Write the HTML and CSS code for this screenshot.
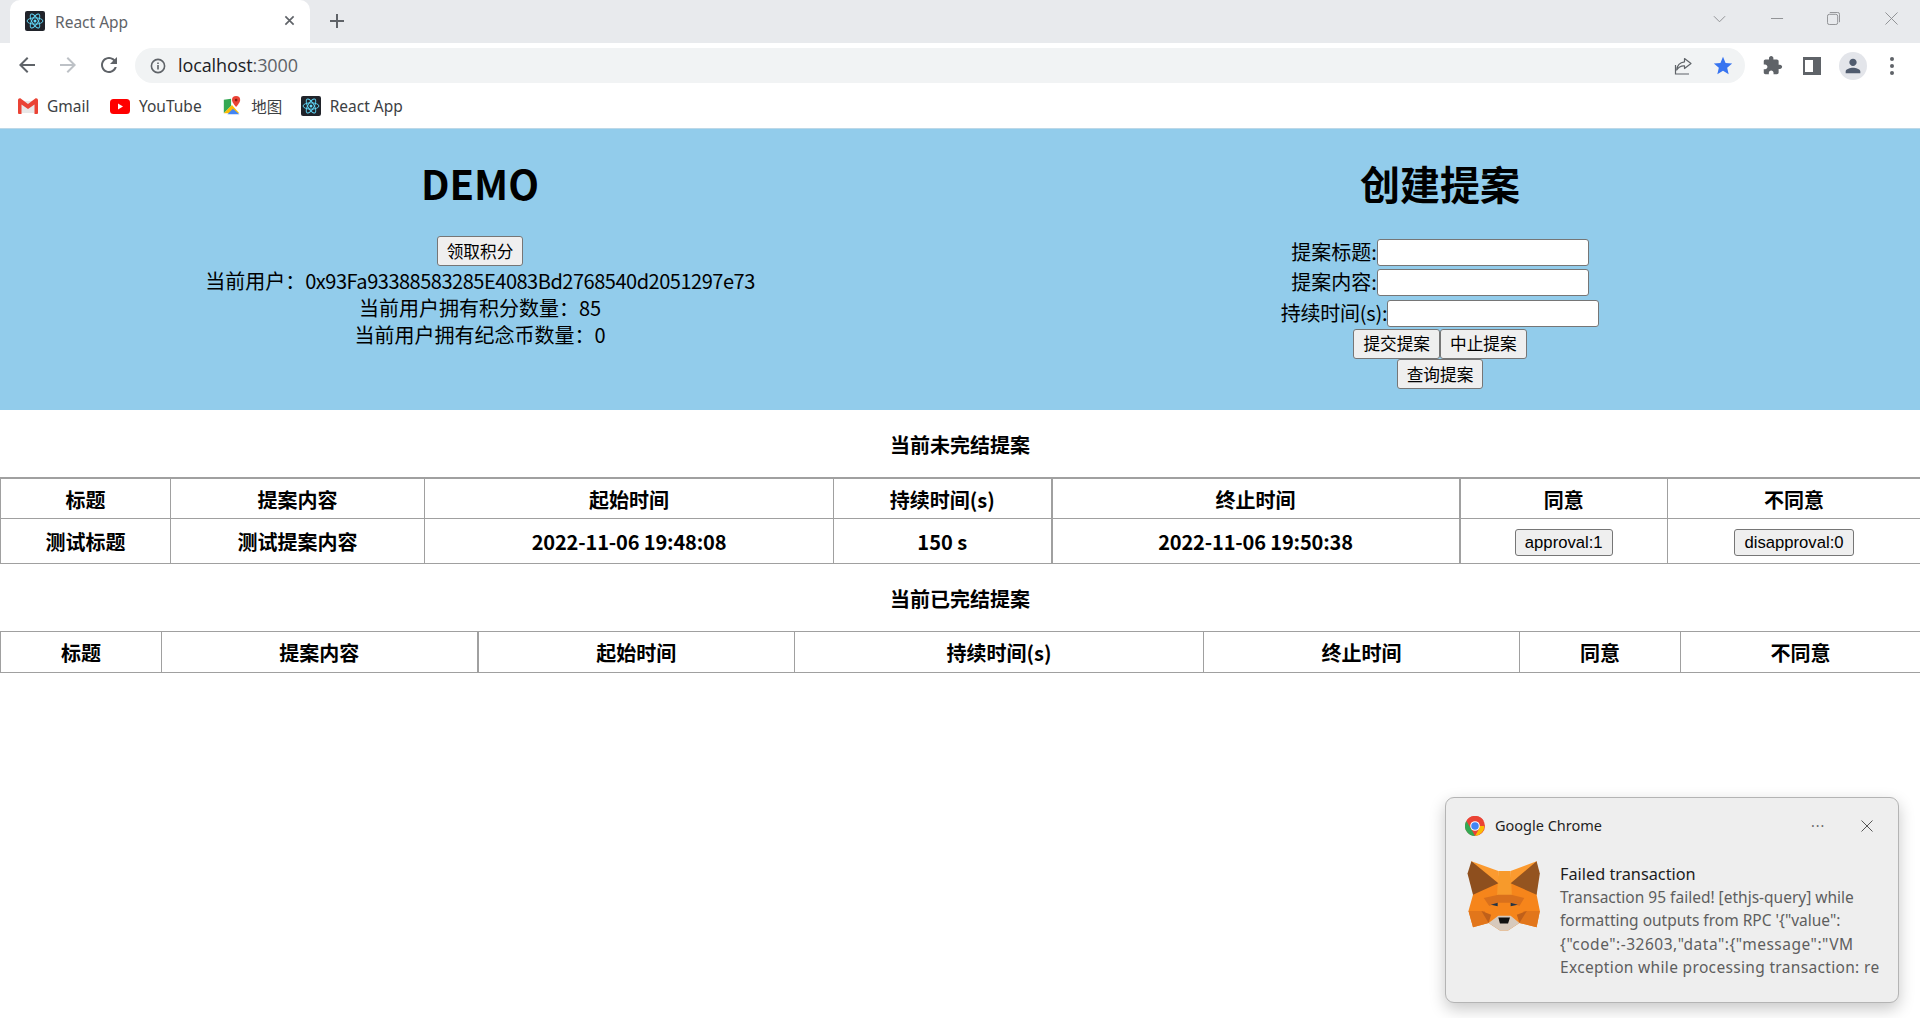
FILE: index.html
```html
<!DOCTYPE html>
<html lang="zh-CN">
<head>
<meta charset="utf-8">
<title>React App</title>
<link rel="stylesheet" href="styles.css">
</head>
<body>
<svg class="defs" width="0" height="0" aria-hidden="true">
  <symbol id="react" viewBox="0 0 24 24">
    <rect width="24" height="24" rx="2.5" fill="#20232a"/>
    <g fill="none" stroke="#61dafb" stroke-width="1.1">
      <ellipse cx="12" cy="12" rx="9.5" ry="3.8"/>
      <ellipse cx="12" cy="12" rx="9.5" ry="3.8" transform="rotate(60 12 12)"/>
      <ellipse cx="12" cy="12" rx="9.5" ry="3.8" transform="rotate(120 12 12)"/>
    </g>
    <circle cx="12" cy="12" r="1.8" fill="#61dafb"/>
  </symbol>
</svg>

<div class="chrome">
  <div class="tabstrip">
    <div class="tab">
      <svg class="tab-fav"><use href="#react"/></svg>
      <span class="tab-title">React App</span>
      <svg class="tab-close" viewBox="0 0 12 12"><path d="M1.5 1.5l9 9M10.5 1.5l-9 9"/></svg>
    </div>
    <svg class="tab-new" viewBox="0 0 16 16"><path d="M8 1v14M1 8h14"/></svg>
    <div class="wincontrols">
      <svg class="win-ico win-chev" viewBox="0 0 14 8"><path d="M1 1l6 6 6-6"/></svg>
      <svg class="win-ico win-min" viewBox="0 0 14 14"><path d="M0 7h13"/></svg>
      <svg class="win-ico win-max" viewBox="0 0 14 14"><rect x=".5" y="2.5" width="11" height="11" rx="2"/><path d="M3 .5h8.5a2 2 0 0 1 2 2V11"/></svg>
      <svg class="win-ico win-x" viewBox="0 0 14 14"><path d="M.5.5l13 13M13.5.5l-13 13"/></svg>
    </div>
  </div>

  <div class="toolbar">
    <svg class="nav-ico" viewBox="0 0 24 24"><path fill="#5f6368" d="M20 11H7.83l5.59-5.59L12 4l-8 8 8 8 1.41-1.41L7.83 13H20v-2z"/></svg>
    <svg class="nav-ico" viewBox="0 0 24 24"><path fill="#bdc1c6" d="M4 11h12.17l-5.59-5.59L12 4l8 8-8 8-1.41-1.41L16.17 13H4v-2z"/></svg>
    <svg class="nav-ico" viewBox="0 0 24 24"><path fill="#5f6368" d="M17.65 6.35C16.2 4.9 14.21 4 12 4c-4.42 0-7.99 3.58-7.99 8s3.57 8 7.99 8c3.73 0 6.84-2.55 7.73-6h-2.08c-.82 2.33-3.04 4-5.65 4-3.31 0-6-2.69-6-6s2.69-6 6-6c1.66 0 3.14.69 4.22 1.78L13 11h7V4l-2.35 2.35z"/></svg>
    <div class="omnibox">
      <svg class="info-ico" viewBox="0 0 16 16"><circle cx="8" cy="8" r="6.6" fill="none" stroke="#5f6368" stroke-width="1.6"/><path fill="#5f6368" d="M7.2 7h1.6v4.4H7.2zM7.2 4.4h1.6V6H7.2z"/></svg>
      <span class="url"><span class="url-host">localhost</span>:3000</span>
      <svg class="share-ico" viewBox="0 0 20 20" fill="none" stroke="#5f6368" stroke-width="1.2"><path d="M2.5 9v9h13.5"/><path d="M11.500 2.500l6.500 5-6.500 5V9.800c-3.400-.2-6 1-7.800 4.200.4-4.700 3.200-7.600 7.800-8.200z" stroke-linejoin="round"/></svg>
      <svg class="star-ico" viewBox="0 0 24 24"><path fill="#3874f0" d="M12 17.27L18.180 21l-1.640-7.030L22 9.240l-7.190-.610L12 2 9.190 8.630 2 9.240l5.460 4.730L5.820 21z"/></svg>
    </div>
    <svg class="ext-ico" viewBox="0 0 24 24"><path fill="#5f6368" d="M20.500 11H19V7c0-1.100-.9-2-2-2h-4V3.500C13 2.120 11.880 1 10.500 1S8 2.120 8 3.500V5H4c-1.100 0-1.990.9-1.990 2v3.800H3.500c1.490 0 2.700 1.210 2.700 2.700s-1.210 2.700-2.700 2.700H2V20c0 1.100.9 2 2 2h3.800v-1.500c0-1.490 1.210-2.700 2.700-2.700 1.490 0 2.700 1.210 2.700 2.700V22H17c1.100 0 2-.9 2-2v-4h1.500c1.380 0 2.500-1.120 2.500-2.500S21.880 11 20.500 11z"/></svg>
    <div class="panel-ico"><span class="panel-light"></span></div>
    <div class="avatar">
      <svg class="avatar-ico" viewBox="0 0 24 24"><path fill="#4f5b6e" d="M12 12c2.210 0 4-1.790 4-4s-1.790-4-4-4-4 1.790-4 4 1.790 4 4 4zm0 2c-2.670 0-8 1.340-8 4v2h16v-2c0-2.660-5.330-4-8-4z"/></svg>
    </div>
    <div class="kebab"><span></span><span></span><span></span></div>
  </div>

  <div class="bookmarks">
    <div class="bookmark bm-gmail">
      <svg class="bm-ico" viewBox="0 0 20 16"><path fill="#e8e8e8" d="M1.500 3h17v12h-17z"/><path fill="#ea4335" d="M0 2.200C0 .6 1.700-.3 3 .7l7 5.300 7-5.300c1.300-1 3-.1 3 1.500V15a1 1 0 0 1-1 1h-2.500V6.500L10 11 3.500 6.500V16H1a1 1 0 0 1-1-1z"/></svg>
      <span>Gmail</span>
    </div>
    <div class="bookmark bm-yt">
      <svg class="bm-ico" viewBox="0 0 20 15"><rect width="20" height="15" rx="3.500" fill="#f00"/><path fill="#fff" d="M8 4.500v6l5-3z"/></svg>
      <span>YouTube</span>
    </div>
    <div class="bookmark bm-maps">
      <svg class="bm-ico bm-ico-tall" viewBox="0 0 20 22"><path fill="#34a853" d="M1 4l8-1v8l-8 8z"/><path fill="#fbbc04" d="M1 19l9-9 8 9z"/><path fill="#4285f4" d="M5 20l6-6 7 6z"/><path fill="#ea4335" d="M14.500 0a4.500 4.500 0 0 1 4.500 4.500c0 3-4.500 7.500-4.500 7.500S10 7.500 10 4.500A4.500 4.500 0 0 1 14.500 0z"/><circle cx="14.500" cy="4.500" r="1.500" fill="#8a1c12"/></svg>
      <span>地图</span>
    </div>
    <div class="bookmark">
      <svg class="bm-ico bm-ico-tall"><use href="#react"/></svg>
      <span>React App</span>
    </div>
  </div>
</div>

<main class="app">
  <header class="hero">
    <section class="hero-col">
      <h1 class="hero-title">DEMO</h1>
      <div class="claim-row"><button class="btn">领取积分</button></div>
      <div class="stat">当前用户：<span class="addr">0x93Fa93388583285E4083Bd2768540d2051297e73</span></div>
      <div class="stat">当前用户拥有积分数量：85</div>
      <div class="stat">当前用户拥有纪念币数量：0</div>
    </section>
    <section class="hero-col">
      <h1 class="hero-title hero-title-form">创建提案</h1>
      <div class="field"><label>提案标题:</label><input class="text-input" type="text"></div>
      <div class="field"><label>提案内容:</label><input class="text-input" type="text"></div>
      <div class="field"><label class="label-tight">持续时间(s):</label><input class="text-input" type="text"></div>
      <div class="actions"><button class="btn">提交提案</button><button class="btn">中止提案</button></div>
      <div class="actions"><button class="btn">查询提案</button></div>
    </section>
  </header>

  <h2 class="section-title">当前未完结提案</h2>
  <table class="grid grid-open">
    <colgroup><col class="a1"><col class="a2"><col class="a3"><col class="a4"><col class="a5"><col class="a6"><col class="a7"></colgroup>
    <thead><tr><th>标题</th><th>提案内容</th><th>起始时间</th><th>持续时间(s)</th><th class="edge">终止时间</th><th class="edge">同意</th><th>不同意</th></tr></thead>
    <tbody>
      <tr>
        <td>测试标题</td><td>测试提案内容</td><td class="when">2022-11-06 19:48:08</td><td>150 s</td><td class="when edge">2022-11-06 19:50:38</td>
        <td class="edge"><button class="btn-vote">approval:1</button></td>
        <td><button class="btn-vote">disapproval:0</button></td>
      </tr>
    </tbody>
  </table>

  <h2 class="section-title">当前已完结提案</h2>
  <table class="grid">
    <colgroup><col class="b1"><col class="b2"><col class="b3"><col class="b4"><col class="b5"><col class="b6"><col class="b7"></colgroup>
    <thead><tr><th>标题</th><th>提案内容</th><th class="edge">起始时间</th><th>持续时间(s)</th><th>终止时间</th><th>同意</th><th>不同意</th></tr></thead>
  </table>
</main>

<aside class="toast">
  <div class="toast-head">
    <svg class="chrome-logo" viewBox="0 0 48 48">
      <circle cx="24" cy="24" r="24" fill="#ea4335"/>
      <path fill="#fbbc04" d="M24 24h22.500A24 24 0 0 1 24 48l10.400-18z"/>
      <path fill="#34a853" d="M24 48A24 24 0 0 1 3.200 12l11.200 18z"/>
      <path fill="#ea4335" d="M3.200 12A24 24 0 0 1 45 12H24z"/>
      <circle cx="24" cy="24" r="11.500" fill="#fff"/>
      <circle cx="24" cy="24" r="9" fill="#4285f4"/>
    </svg>
    <span class="toast-app">Google Chrome</span>
    <span class="toast-more">···</span>
    <svg class="toast-close" viewBox="0 0 12 12"><path d="M.5.5l11 11M11.500.5l-11 11"/></svg>
  </div>
  <div class="toast-body">
    <svg class="fox" viewBox="40 25 235 225">
      <path fill="#f6851b" d="M57 32l83 53h38l80-53v103l10 50-10 50-53-13-35 23h-25l-35-23-48 13-14-50 14-50z"/>
      <path fill="#f79a2b" d="M140 62l38 0 4 78h-46z"/>
      <path fill="#fb9a2f" d="M57 32l83 30 0 38zM258 32l-80 30 0 38z"/>
      <path fill="#8e4f1e" d="M57 32l83 68-78 35-17-65z"/>
      <path fill="#945420" d="M258 32l-80 68 80 35 10-65z"/>
      <path fill="#d9701c" d="M95 145l45-10h40l40 10-15 25-25-10h-40l-28 10z"/>
      <path fill="#233447" d="M117 166l21-6v11zM200 166l-22-6v11z"/>
      <path fill="#e2761b" d="M48 185l50 0 12 37-48 13zM268 185h-50l-13 37 53 13z"/>
      <path fill="#c0601a" d="M88 185l22 37 8-25zM228 185l-23 37-8-25z"/>
      <path fill="#d7c9bc" d="M110 222l30-22h38l27 22-35 23h-25z"/>
      <path fill="#111" d="M140 205h36l-6 19h-25z"/>
    </svg>
    <div class="toast-text">
      <div class="toast-title">Failed transaction</div>
      <div class="toast-msg">Transaction 95 failed! [ethjs-query] while</div>
      <div class="toast-msg">formatting outputs from RPC '{"value":</div>
      <div class="toast-msg toast-msg-wide">{"code":-32603,"data":{"message":"VM</div>
      <div class="toast-msg toast-msg-mid">Exception while processing transaction: re</div>
    </div>
  </div>
</aside>
</body>
</html>
```

FILE: styles.css
```css
* { box-sizing: border-box; }
html, body { margin: 0; padding: 0; height: 100%; background: #fff; overflow: hidden; }
body {
  position: relative;
  font-family: "Noto Sans CJK SC", "Noto Sans", sans-serif;
  color: #000;
}
.defs { position: absolute; }

/* browser chrome */
.chrome { height: 129px; font-family: "Noto Sans", "Noto Sans CJK SC", sans-serif; }
.tabstrip { height: 43px; background: #e8eaed; display: flex; align-items: center; }
.tab {
  width: 300px; height: 43px; margin-left: 10px; background: #fff;
  border-radius: 10px 10px 0 0; display: flex; align-items: center; padding-left: 15px; flex: none;
}
.tab-fav { width: 20px; height: 20px; flex: none; margin-top: -2px; }
.tab-title { margin-left: 10px; font-size: 15.5px; color: #5f6368; width: 205px; flex: none; }
.tab-close { width: 11px; height: 11px; margin-left: 24px; margin-top: -2px; flex: none; }
.tab-close path { stroke: #5f6368; stroke-width: 1.8; fill: none; }
.tab-new { width: 16px; height: 16px; margin-left: 19px; margin-top: -2px; flex: none; }
.tab-new path { stroke: #5f6368; stroke-width: 2; fill: none; }
.wincontrols { margin-left: auto; display: flex; align-items: center; padding-right: 22px; margin-top: -6px; }
.win-ico { width: 13px; height: 13px; fill: none; stroke: #8a8c90; stroke-width: 1; }
.win-chev { height: 8px; }
.win-min { margin-left: 45px; }
.win-max { margin-left: 43px; }
.win-x { margin-left: 45px; }

.toolbar { height: 45px; background: #fff; display: flex; align-items: center; padding-left: 15px; }
.nav-ico { width: 24px; height: 24px; flex: none; margin-right: 17px; margin-top: -2px; }
.omnibox {
  width: 1610px; height: 35px; margin-left: -3px; border-radius: 18px; background: #f1f3f4;
  display: flex; align-items: center; padding-left: 15px; flex: none;
}
.info-ico { width: 16px; height: 16px; flex: none; }
.url { margin-left: 12px; font-size: 18px; color: #5f6368; width: 1498px; margin-top: -2px; font-family: "Open Sans", "Noto Sans", sans-serif; letter-spacing: -.1px; }
.url-host { color: #202124; }
.share-ico { width: 20px; height: 20px; flex: none; margin-left: -3px; }
.star-ico { width: 22px; height: 22px; flex: none; margin-left: 19px; }
.ext-ico { width: 21px; height: 21px; margin-left: 17px; flex: none; }
.panel-ico {
  width: 18px; height: 18px; margin-left: 20px; background: #5f6368; flex: none; padding: 3px 8px 3px 2px;
}
.panel-light { display: block; width: 100%; height: 100%; background: #fff; }
.avatar {
  width: 28px; height: 28px; border-radius: 50%; background: #e3e5ea; margin-left: 18px; flex: none;
  display: flex; align-items: center; justify-content: center;
}
.avatar-ico { width: 22px; height: 22px; }
.kebab { margin-left: 23px; display: flex; flex-direction: column; gap: 3px; flex: none; width: 4px; }
.kebab span { width: 4px; height: 4px; border-radius: 50%; background: #5f6368; }

.bookmarks { height: 41px; display: flex; align-items: center; padding: 0 0 4px 18px; background: #fff; border-bottom: 1px solid #bcd8e8; }
.bookmark { display: flex; align-items: center; font-size: 15.5px; color: #3c4043; margin-right: 20.5px; }
.bm-maps { margin-right: 18.5px; }
.bm-ico { width: 20px; height: 16px; margin-right: 9px; flex: none; }
.bm-ico-tall { height: 20px; }
.bm-yt .bm-ico { height: 15px; }

/* app */
.hero { display: grid; grid-template-columns: 1fr 1fr; height: 281px; background: #92cceb; }
.hero-col { text-align: center; }
.hero-title { margin: 27px 0 26px; font-size: 40px; line-height: 54px; font-weight: 700; }
.hero-title-form { margin-bottom: 27px; }
.claim-row { height: 31px; }
.stat { font-size: 20px; line-height: 27px; }
.addr { letter-spacing: -.48px; }
.btn {
  height: 30px; padding: 0 9px; font: 16.67px/1 "Noto Sans CJK SC", sans-serif; color: #000;
  background: #efefef; border: 1px solid #767676; border-radius: 3px;
}
.field { height: 30.5px; display: flex; align-items: center; justify-content: center; font-size: 20px; line-height: 27px; }
.field label { margin-top: -2px; }
.label-tight { letter-spacing: -.25px; }
.text-input { width: 212px; height: 27px; margin: 0; padding: 0 2px; background: #fff; border: 1px solid #767676; border-radius: 3px; }
.actions { height: 30.5px; display: flex; justify-content: center; align-items: center; }

.section-title { margin: 21px 0 19px; font-size: 20px; line-height: 27px; font-weight: 700; text-align: center; }
.grid { width: 1920px; table-layout: fixed; border-collapse: collapse; }
.grid th, .grid td {
  border: 1px solid #a0a0a0; padding: 0; text-align: center; font-size: 20px; font-weight: 700; line-height: 27px;
}
.grid th { height: 41px; padding-top: 2px; }
.grid td { height: 45px; padding-top: 2px; }
.grid th.edge, .grid td.edge { border-left-width: 2px; }
.grid-open th { border-top-width: 2px; height: 40px; }
.when { letter-spacing: -.15px; }
.a1 { width: 170px; } .a2 { width: 254px; } .a3 { width: 409px; } .a4 { width: 218px; }
.a5 { width: 408px; } .a6 { width: 208px; } .a7 { width: 253px; }
.b1 { width: 161px; } .b2 { width: 316px; } .b3 { width: 317px; } .b4 { width: 409px; }
.b5 { width: 316px; } .b6 { width: 161px; } .b7 { width: 240px; }
.btn-vote {
  height: 27px; padding: 2px 9px 0; margin-top: -2px; font: 16.67px/1 "Liberation Sans", sans-serif; color: #000;
  background: #efefef; border: 1px solid #767676; border-radius: 3px; vertical-align: middle;
}

/* notification */
.toast {
  position: absolute; left: 1445px; top: 797px; width: 454px; height: 206px;
  background: #eeeeee; border: 1px solid #b4b4b4; border-radius: 9px;
  box-shadow: 0 6px 16px rgba(0,0,0,.22);
  font-family: "Noto Sans", sans-serif;
}
.toast-head { display: flex; align-items: center; height: 28px; margin-top: 13px; padding-left: 19px; }
.chrome-logo { width: 20px; height: 20px; flex: none; margin-top: 2px; }
.toast-app { margin-left: 10px; font-size: 14.5px; color: #1f1f1f; width: 316px; flex: none; }
.toast-more { font-size: 14px; color: #666; width: 50px; letter-spacing: 1px; flex: none; }
.toast-close { width: 12px; height: 12px; flex: none; margin-top: 2px; }
.toast-close path { stroke: #555; stroke-width: 1; fill: none; }
.toast-body { display: flex; padding-left: 19px; margin-top: 20px; }
.fox { width: 78px; height: 73px; flex: none; }
.toast-text { margin-left: 17px; width: 320px; margin-top: 3px; }
.toast-title { font-size: 16.3px; line-height: 24px; color: #1c1c1c; }
.toast-msg { font-size: 15.5px; line-height: 23.3px; color: #5e5e5e; white-space: nowrap; }
.toast-msg-wide { letter-spacing: .5px; }
.toast-msg-mid { letter-spacing: .33px; }
```
